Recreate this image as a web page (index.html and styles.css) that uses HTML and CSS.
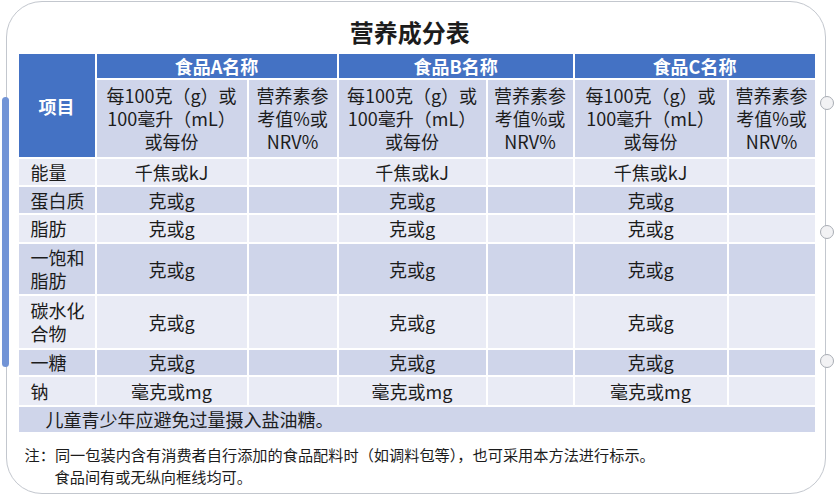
FILE: index.html
```html
<!DOCTYPE html>
<html lang="zh-CN">
<head>
<meta charset="utf-8">
<title>营养成分表</title>
<link rel="stylesheet" href="styles.css">
</head>
<body>
<div class="frame">
  <h1 class="title">营养成分表</h1>
  <table class="nt">
    <colgroup>
      <col class="c0"><col class="c1"><col class="c2"><col class="c3"><col class="c4"><col class="c5"><col class="c6">
    </colgroup>
    <thead>
      <tr class="h1">
        <th class="item" rowspan="2">项目</th>
        <th colspan="2">食品A名称</th>
        <th colspan="2">食品B名称</th>
        <th colspan="2">食品C名称</th>
      </tr>
      <tr class="h2">
        <th>每100克（g）或<br>100毫升（mL）<br>或每份</th>
        <th>营养素参<br>考值%或<br>NRV%</th>
        <th>每100克（g）或<br>100毫升（mL）<br>或每份</th>
        <th>营养素参<br>考值%或<br>NRV%</th>
        <th>每100克（g）或<br>100毫升（mL）<br>或每份</th>
        <th>营养素参<br>考值%或<br>NRV%</th>
      </tr>
    </thead>
    <tbody>
      <tr class="r lt h28"><td class="n">能量</td><td>千焦或kJ</td><td></td><td>千焦或kJ</td><td></td><td>千焦或kJ</td><td></td></tr>
      <tr class="r dk h28"><td class="n">蛋白质</td><td>克或g</td><td></td><td>克或g</td><td></td><td>克或g</td><td></td></tr>
      <tr class="r lt h29"><td class="n">脂肪</td><td>克或g</td><td></td><td>克或g</td><td></td><td>克或g</td><td></td></tr>
      <tr class="r dk h52"><td class="n">一饱和<br>脂肪</td><td>克或g</td><td></td><td>克或g</td><td></td><td>克或g</td><td></td></tr>
      <tr class="r lt h54"><td class="n">碳水化<br>合物</td><td>克或g</td><td></td><td>克或g</td><td></td><td>克或g</td><td></td></tr>
      <tr class="r dk h27"><td class="n">一糖</td><td>克或g</td><td></td><td>克或g</td><td></td><td>克或g</td><td></td></tr>
      <tr class="r lt h30"><td class="n">钠</td><td>毫克或mg</td><td></td><td>毫克或mg</td><td></td><td>毫克或mg</td><td></td></tr>
      <tr class="r dk h27"><td class="tip" colspan="7">儿童青少年应避免过量摄入盐油糖。</td></tr>
    </tbody>
  </table>
  <p class="note">注：同一包装内含有消费者自行添加的食品配料时（如调料包等），也可采用本方法进行标示。<br>食品间有或无纵向框线均可。</p>
  <div class="scrollbar"></div>
  <span class="handle hd1"></span>
  <span class="handle hd2"></span>
  <span class="handle hd3"></span>
</div>
</body>
</html>
```
FILE: styles.css
```css
html, body {
  margin: 0;
  padding: 0;
  background: #ffffff;
}
body {
  font-family: "Noto Sans CJK SC", "Noto Sans", sans-serif;
  color: #1c1c1c;
}
.frame {
  position: relative;
  box-sizing: border-box;
  width: 820px;
  height: 493px;
  margin: 1px 0 0 6px;
  border: 1.5px solid #c3c7ce;
  border-radius: 36px;
  padding: 14px 10px 0 9.5px;
  background: #ffffff;
}
.title {
  margin: 0 0 4px 0;
  padding-right: 12px;
  font-size: 24px;
  line-height: 32px;
  font-weight: 700;
  text-align: center;
  color: #1c1c1c;
}
.nt {
  width: 798px;
  table-layout: fixed;
  border-collapse: collapse;
  font-size: 18px;
}
.c0 { width: 78px; }
.c1 { width: 152px; }
.c2 { width: 90px; }
.c3 { width: 149px; }
.c4 { width: 87px; }
.c5 { width: 154px; }
.c6 { width: 88px; }
.nt th, .nt td {
  border: 2px solid #ffffff;
  padding: 0;
  vertical-align: middle;
  text-align: center;
  overflow: hidden;
  white-space: nowrap;
}
.h1 { height: 26px; }
.h1 th {
  background: #4472c4;
  color: #ffffff;
  font-weight: 700;
  font-size: 18px;
  line-height: 22px;
}
.h2 { height: 79px; }
.h2 th {
  background: #cfd5ea;
  font-weight: 400;
  line-height: 23px;
  color: #1c1c1c;
}
.r td { line-height: 23px; }
.lt td { background: #e9ebf5; }
.dk td { background: #cfd5ea; }
.h27 { height: 27px; }
.h28 { height: 28px; }
.h29 { height: 29px; }
.h30 { height: 30px; }
.h52 { height: 52px; }
.h54 { height: 54px; }
.nt td.n {
  text-align: left;
  padding-left: 12px;
}
.nt td.tip {
  text-align: left;
  padding-left: 27px;
}
.note {
  margin: 9px 0 0 8px;
  padding-left: 30px;
  text-indent: -30px;
  font-size: 15.2px;
  line-height: 22px;
  color: #1c1c1c;
}
.scrollbar {
  position: absolute;
  left: -5px;
  top: 95px;
  width: 7px;
  height: 270px;
  border-radius: 4px;
  background: #7294d6;
}
.handle {
  position: absolute;
  right: -8.5px;
  width: 12px;
  height: 12px;
  border-radius: 50%;
  background: #f2f2f4;
  border: 1px solid #a9adb4;
}
.hd1 { top: 94px; }
.hd2 { top: 223px; }
.hd3 { top: 352px; }
```
